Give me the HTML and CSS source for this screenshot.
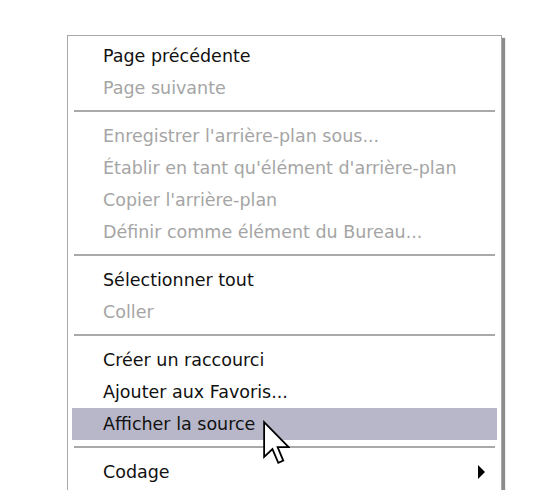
FILE: index.html
```html
<!DOCTYPE html>
<html lang="fr">
<head>
    <meta charset="UTF-8">
    <meta name="viewport" content="width=device-width, initial-scale=1.0">
    <title>Menu contextuel</title>
    <link rel="stylesheet" href="styles.css">
</head>
<body>
    <div class="page">
        <ul class="menu">
            <li class="item">Page précédente</li>
            <li class="item disabled">Page suivante</li>
            <li class="sep"></li>
            <li class="item disabled">Enregistrer l'arrière-plan sous...</li>
            <li class="item disabled">Établir en tant qu'élément d'arrière-plan</li>
            <li class="item disabled">Copier l'arrière-plan</li>
            <li class="item disabled">Définir comme élément du Bureau...</li>
            <li class="sep"></li>
            <li class="item">Sélectionner tout</li>
            <li class="item disabled">Coller</li>
            <li class="sep"></li>
            <li class="item">Créer un raccourci</li>
            <li class="item">Ajouter aux Favoris...</li>
            <li class="item active">Afficher la source
                <!-- mouse pointer over the hovered row -->
                <svg class="cursor" width="27" height="47" viewBox="0 0 12 20">
                    <path d="M0.5 0.5 L0.5 16 L4.2 12.5 L6.8 18.6 L9 17.6 L6.5 11.6 L11.4 11.6 Z" fill="#fff" stroke="#000" stroke-width="0.8" stroke-linejoin="miter"/>
                </svg>
            </li>
            <li class="sep"></li>
            <li class="item submenu">Codage <span class="arrow"></span></li>
        </ul>
    </div>
</body>
</html>
```

FILE: styles.css
```css
body {
    margin: 0;
    background-color: #fff;
    font-family: "DejaVu Sans", Verdana, sans-serif;
}
.page {
    padding: 35px 0 0 67px;
    height: 455px;
    overflow: hidden;
}
.menu {
    list-style: none;
    margin: 0;
    padding: 4px 4px 20px 4px;
    width: 425px;
    background-color: #fff;
    border: 1px solid #a8a8a8;
    box-shadow: 3px 3px 1px rgba(0, 0, 0, 0.45);
}
.item {
    position: relative;
    height: 32px;
    line-height: 32px;
    padding-left: 31px;
    font-size: 17.5px;
    color: #111;
    white-space: nowrap;
}
.item.disabled {
    color: #a5a5a5;
}
.item.active {
    background-color: #b8b7ca;
}
.sep {
    height: 2px;
    margin: 6px 2px 8px 2px;
    background-color: #a9a9a9;
}
.arrow {
    position: absolute;
    right: 12px;
    top: 9px;
    width: 0;
    height: 0;
    border-top: 7px solid transparent;
    border-bottom: 7px solid transparent;
    border-left: 7px solid #000;
}
.cursor {
    position: absolute;
    left: 191px;
    top: 12px;
}
```
